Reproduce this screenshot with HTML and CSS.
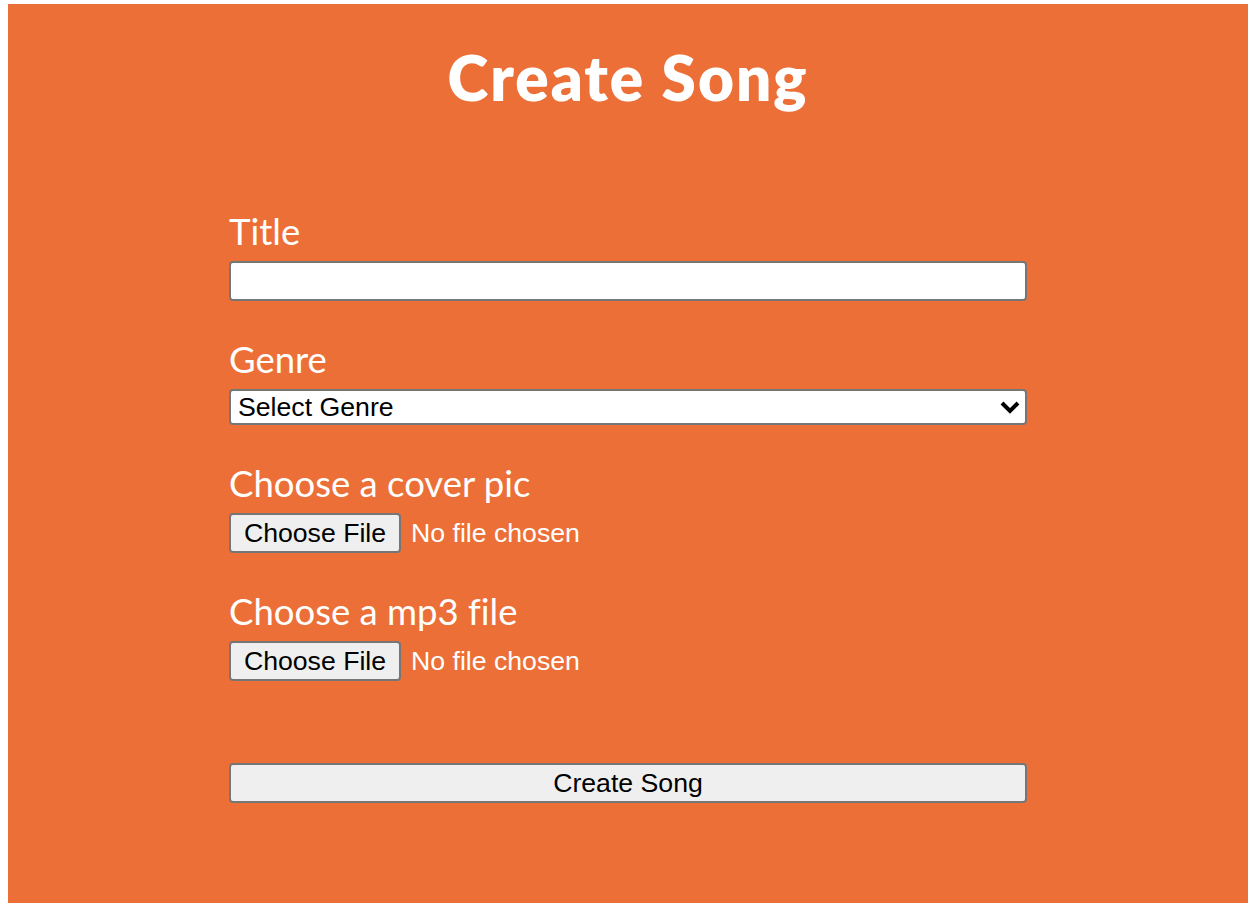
FILE: index.html
```html
<!DOCTYPE html>
<html lang="en">
<head>
<meta charset="utf-8">
<title>Create Song</title>
<link rel="stylesheet" href="styles.css">
</head>
<body>
<div class="page">
  <h1 class="heading">Create Song</h1>
  <form class="song-form">
    <div class="field">
      <label class="field-label" for="title">Title</label>
      <input class="text-input" id="title" type="text">
    </div>
    <div class="field">
      <label class="field-label" for="genre">Genre</label>
      <div class="select-wrap">
        <select class="select-input" id="genre">
          <option>Select Genre</option>
        </select>
        <svg class="select-arrow" width="22" height="14" viewBox="0 0 22 14"><path d="M3 3 L11 11 L19 3" fill="none" stroke="#000" stroke-width="4"/></svg>
      </div>
    </div>
    <div class="field">
      <label class="field-label" for="cover">Choose a cover pic</label>
      <input class="file-input" id="cover" type="file">
    </div>
    <div class="field">
      <label class="field-label" for="mp3">Choose a mp3 file</label>
      <input class="file-input" id="mp3" type="file">
    </div>
    <button class="submit-btn" type="button">Create Song</button>
  </form>
</div>
</body>
</html>
```
FILE: styles.css
```css
html, body {
  margin: 0;
  padding: 0;
  background: #fff;
}
body {
  padding: 4px 4px 3px 8px;
}
.page {
  background: #ec6f37;
  height: 899px;
  display: flex;
  flex-direction: column;
  align-items: center;
  color: #fff;
  font-family: "Lato", "Liberation Sans", sans-serif;
  font-variant-ligatures: none;
}
.heading {
  margin: 0;
  padding-top: 35px;
  font-size: 62px;
  font-weight: 800;
  line-height: 76px;
  letter-spacing: 2px;
}
.song-form {
  width: 798px;
  margin-top: 106px;
  display: flex;
  flex-direction: column;
  gap: 48px;
}
.field {
  display: flex;
  flex-direction: column;
}
.field-label {
  display: block;
  font-size: 36.5px;
  line-height: 20px;
  height: 20px;
  margin-bottom: 20px;
}
.text-input {
  box-sizing: border-box;
  height: 40px;
  width: 100%;
  border: 2px solid #767676;
  border-radius: 4px;
  background: #fff;
  font: 26.67px "Liberation Sans", Arial, sans-serif;
  padding: 0 8px;
  margin: 0;
}
.select-wrap {
  position: relative;
  height: 36px;
}
.select-input {
  -webkit-appearance: none;
  appearance: none;
  box-sizing: border-box;
  width: 100%;
  height: 36px;
  border: 2px solid #767676;
  border-radius: 4px;
  background: #fff;
  color: #000;
  font: 26.67px "Liberation Sans", Arial, sans-serif;
  padding: 0 7px;
  margin: 0;
}
.select-arrow {
  position: absolute;
  right: 6px;
  top: 11px;
  pointer-events: none;
}
.file-input {
  font: 26.67px "Liberation Sans", Arial, sans-serif;
  color: #fff;
  height: 40px;
  margin: 0;
  padding: 0;
}
.file-input::file-selector-button {
  box-sizing: border-box;
  height: 40px;
  width: 172px;
  font: 26.67px "Liberation Sans", Arial, sans-serif;
  color: #000;
  background: #efefef;
  border: 2px solid #767676;
  border-radius: 4px;
  padding: 0;
  margin: 0 10px 0 0;
}
.submit-btn {
  margin-top: 34px;
  box-sizing: border-box;
  height: 40px;
  width: 100%;
  font: 26.67px "Liberation Sans", Arial, sans-serif;
  color: #000;
  background: #efefef;
  border: 2px solid #767676;
  border-radius: 4px;
  padding: 0;
}
```
